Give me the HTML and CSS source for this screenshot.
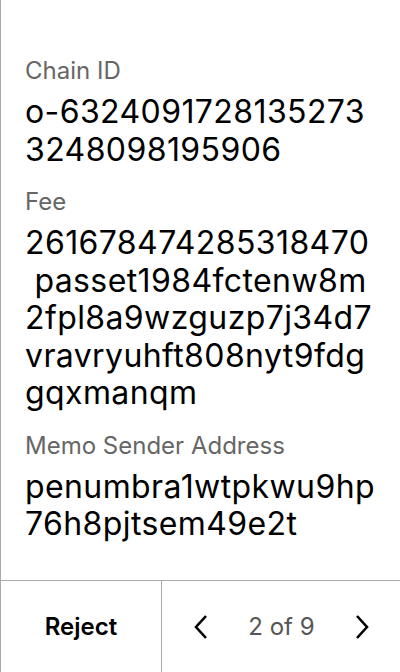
FILE: index.html
```html
<!DOCTYPE html>
<html>
<head>
<meta charset="utf-8">
<link rel="stylesheet" href="styles.css">
</head>
<body>
<div class="screen">
  <div class="content">
    <div class="field">
      <div class="label">Chain ID</div>
      <div class="value">o-63240917281352733248098195906</div>
    </div>
    <div class="field">
      <div class="label">Fee</div>
      <div class="value spaces">261678474285318470 passet1984fctenw8m2fpl8a9wzguzp7j34d7vravryuhft808nyt9fdggqxmanqm</div>
    </div>
    <div class="field">
      <div class="label">Memo Sender Address</div>
      <div class="value">penumbra1wtpkwu9hp76h8pjtsem49e2t</div>
    </div>
  </div>
  <div class="footer">
    <div class="reject">Reject</div>
    <div class="pager">
      <svg class="chev" width="16" height="26" viewBox="0 0 16 26"><path d="M13 2 L3 13 L13 24" fill="none" stroke="#000" stroke-width="2.6"/></svg>
      <span class="count">2 of 9</span>
      <svg class="chev" width="16" height="26" viewBox="0 0 16 26"><path d="M3 2 L13 13 L3 24" fill="none" stroke="#000" stroke-width="2.6"/></svg>
    </div>
  </div>
</div>
</body>
</html>
```
FILE: styles.css
```css
html, body {
  margin: 0;
  padding: 0;
  background: #fff;
}
body {
  font-family: Inter, "Noto Sans", sans-serif;
  color: #000;
}
.screen {
  width: 400px;
  height: 672px;
  box-sizing: border-box;
  border-left: 1px solid #aaa;
  display: flex;
  flex-direction: column;
}
.content {
  flex: 1;
  padding: 56px 24px 0 24px;
  display: flex;
  flex-direction: column;
  gap: 19px;
}
.field {
  display: flex;
  flex-direction: column;
  gap: 7px;
}
.label {
  font-size: 24px;
  line-height: 30px;
  color: #666;
}
.value {
  font-size: 32px;
  line-height: 37.5px;
  letter-spacing: 0.4px;
  word-break: break-all;
  line-break: anywhere;
}
.value.spaces {
  white-space: break-spaces;
}
.footer {
  height: 92px;
  flex: none;
  border-top: 1px solid #aaa;
  box-sizing: border-box;
  display: flex;
}
.reject {
  width: 160px;
  border-right: 1px solid #aaa;
  display: flex;
  align-items: center;
  justify-content: center;
  font-size: 24px;
  font-weight: 600;
}
.pager {
  flex: 1;
  display: flex;
  align-items: center;
  justify-content: space-between;
  padding: 0 30px 0 31px;
}
.count {
  font-size: 24px;
  color: #555;
}
.chev {
  display: block;
}
```
